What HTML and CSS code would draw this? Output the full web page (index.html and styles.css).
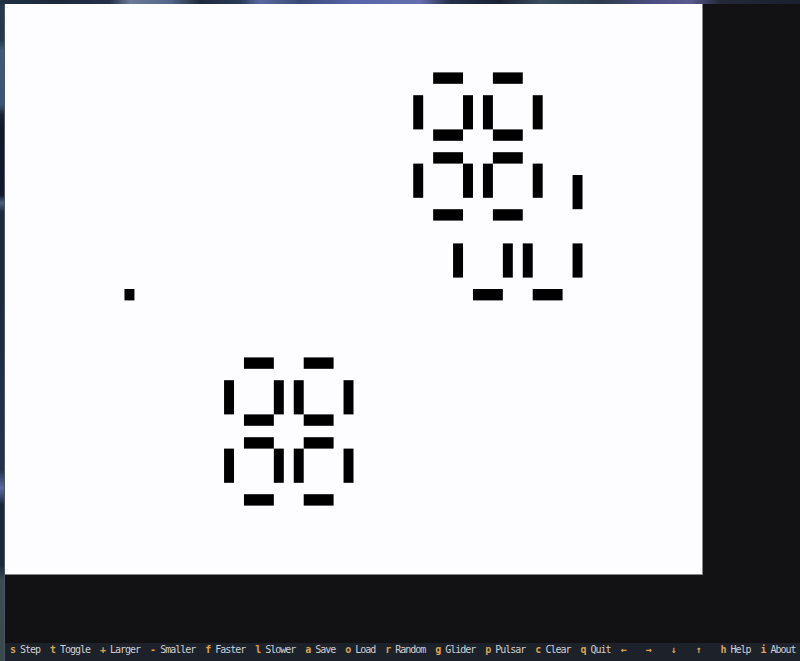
FILE: index.html
```html
<!DOCTYPE html>
<html lang="en">
<head>
<meta charset="utf-8">
<title>Game of Life</title>
<link rel="stylesheet" href="styles.css">
</head>
<body>
<div class="desktop">
  <div class="terminal">
    <div class="main">
      <div class="board">
        <svg class="cells" viewBox="0 0 70 50" preserveAspectRatio="none" width="697" height="570">
          <g fill="#000">
            <!-- lone cell -->
            <rect x="12" y="25" width="1" height="1"/>
            <!-- upper pulsar at (41,6) -->
            <rect x="43" y="6" width="3" height="1"/><rect x="49" y="6" width="3" height="1"/>
            <rect x="43" y="11" width="3" height="1"/><rect x="49" y="11" width="3" height="1"/>
            <rect x="43" y="13" width="3" height="1"/><rect x="49" y="13" width="3" height="1"/>
            <rect x="43" y="18" width="3" height="1"/><rect x="49" y="18" width="3" height="1"/>
            <rect x="41" y="8" width="1" height="3"/><rect x="46" y="8" width="1" height="3"/>
            <rect x="48" y="8" width="1" height="3"/><rect x="53" y="8" width="1" height="3"/>
            <rect x="41" y="14" width="1" height="3"/><rect x="46" y="14" width="1" height="3"/>
            <rect x="48" y="14" width="1" height="3"/><rect x="53" y="14" width="1" height="3"/>
            <!-- extras -->
            <rect x="57" y="15" width="1" height="3"/>
            <rect x="45" y="21" width="1" height="3"/><rect x="50" y="21" width="1" height="3"/>
            <rect x="52" y="21" width="1" height="3"/><rect x="57" y="21" width="1" height="3"/>
            <rect x="47" y="25" width="3" height="1"/><rect x="53" y="25" width="3" height="1"/>
            <!-- lower pulsar at (22,31) -->
            <rect x="24" y="31" width="3" height="1"/><rect x="30" y="31" width="3" height="1"/>
            <rect x="24" y="36" width="3" height="1"/><rect x="30" y="36" width="3" height="1"/>
            <rect x="24" y="38" width="3" height="1"/><rect x="30" y="38" width="3" height="1"/>
            <rect x="24" y="43" width="3" height="1"/><rect x="30" y="43" width="3" height="1"/>
            <rect x="22" y="33" width="1" height="3"/><rect x="27" y="33" width="1" height="3"/>
            <rect x="29" y="33" width="1" height="3"/><rect x="34" y="33" width="1" height="3"/>
            <rect x="22" y="39" width="1" height="3"/><rect x="27" y="39" width="1" height="3"/>
            <rect x="29" y="39" width="1" height="3"/><rect x="34" y="39" width="1" height="3"/>
          </g>
        </svg>
      </div>
    </div>
    <div class="footer">
      <div class="keys"> <b>s</b> Step  <b>t</b> Toggle  <b>+</b> Larger  <b>-</b> Smaller  <b>f</b> Faster  <b>l</b> Slower  <b>a</b> Save  <b>o</b> Load  <b>r</b> Random  <b>g</b> Glider  <b>p</b> Pulsar  <b>c</b> Clear  <b>q</b> Quit  <b>←</b>    <b>→</b>    <b>↓</b>    <b>↑</b>    <b>h</b> Help  <b>i</b> About</div>
    </div>
  </div>
</div>
</body>
</html>
```

FILE: styles.css
```css
html, body {
  margin: 0;
  padding: 0;
}

body {
  width: 800px;
  height: 661px;
  overflow: hidden;
  background:
    linear-gradient(to right,
      #1f3242 0px, #1c2a3a 60px, #24324a 110px, #6a7a98 130px, #56668a 170px,
      #1e2a3c 200px, #2a3a58 240px, #5a6aa0 260px, #3a4a78 300px,
      #5664a6 350px, #6470b0 420px, #26304a 450px, #1a2434 500px,
      #3a4e5e 540px, #2c3c4c 600px, #4c4c80 650px, #5a5a90 690px,
      #242838 720px, #1a2030 800px) top left / 100% 4px no-repeat,
    linear-gradient(to bottom,
      #233848 0px, #243a4c 40px, #3e5a78 50px, #3a5676 105px, #1a2030 115px,
      #101828 130px, #121a2a 195px, #4a6080 203px, #1c2a3c 212px,
      #1c2a3c 300px, #203048 400px, #22324a 470px, #5a6aa0 488px,
      #1a2838 505px, #1a2838 565px, #3c4c50 580px, #3a4a4c 661px);
  font-family: "DejaVu Sans Mono", "Liberation Mono", monospace;
}

.desktop {
  display: flex;
  padding: 4px 0 0 4px;
  height: 657px;
}

.terminal {
  flex: 1;
  display: flex;
  flex-direction: column;
  background: #121114;
  border-left: 1px solid #4a5566;
}

.main {
  flex: 1;
  display: flex;
  align-items: flex-start;
}

.board {
  width: 697px;
  height: 570px;
  background: #fdfcfe;
  border-right: 1px solid #86868c;
  border-bottom: 1px solid #86868c;
}

.cells {
  display: block;
}

.footer {
  height: 18px;
  background: #1d2129;
  overflow: hidden;
  font-size: 10px;
  line-height: 12px;
}

.keys {
  white-space: pre;
  color: #cdd0d6;
  letter-spacing: -1.02px;
  padding-top: 0.5px;
}

.keys b {
  font-weight: bold;
  color: #dca24c;
}
```
